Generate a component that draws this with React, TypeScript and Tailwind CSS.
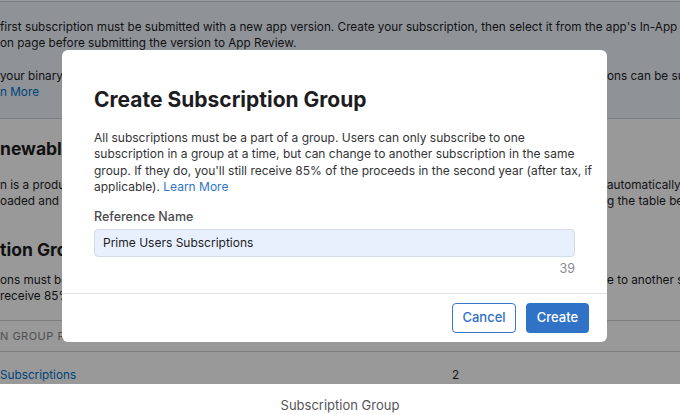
import React from "react";

const font = { fontFamily: "Inter, 'Liberation Sans', sans-serif" };

function SplitLine({ left, right, className }: { left: React.ReactNode; right?: React.ReactNode; className?: string }) {
  return (
    <div className={"flex whitespace-nowrap overflow-hidden " + (className ?? "")}>
      <div className="w-[607px] shrink-0 overflow-hidden">{left}</div>
      {right && <div>{right}</div>}
    </div>
  );
}

export default function App() {
  return (
    <div className="w-[680px] h-[415px] bg-white overflow-hidden" style={font}>
      <div className="relative h-[384px] overflow-hidden">
        {/* background page */}
        <div className="flex flex-col text-[11.75px] text-[#1d1d1f]">
          <div className="mt-[1px] h-[118px] bg-[#eef5fd] border-t border-b border-[#c9d2dc] pt-[17px] leading-[16px]">
            <div className="whitespace-nowrap overflow-hidden">
              first subscription must be submitted with a new app version. Create your subscription, then select it from the app's In-App Purchases
            </div>
            <div className="whitespace-nowrap overflow-hidden">on page before submitting the version to App Review.</div>
            <div className="mt-[17px]">
              <SplitLine
                left={<span>your binary has been uploaded and your first subscription has been approved</span>}
                right={<span>ons can be submitted</span>}
              />
            </div>
            <div className="text-[#0070c9]">n More</div>
          </div>
          <div className="pt-[19px] text-[17.5px] font-bold leading-[22px] whitespace-nowrap">newable Subscriptions</div>
          <div className="mt-[17px] leading-[16px]">
            <SplitLine
              left={<span>n is a product that users can purchase on a recurring basis</span>}
              right={<span>automatically</span>}
            />
            <SplitLine
              left={<span>oaded and your first subscription has been created</span>}
              right={<span>g the table below</span>}
            />
          </div>
          <div className="mt-[30px] text-[17.5px] font-bold leading-[22px] whitespace-nowrap">tion Groups</div>
          <div className="mt-[11px] leading-[16px]">
            <SplitLine
              left={<span>ons must be a part of a group</span>}
              right={<span>e to another subscription</span>}
            />
            <div className="whitespace-nowrap">receive 85% of the proceeds</div>
          </div>
          <div className="mt-[16px] border-t border-b border-[#d2d2d7] h-[32px] flex items-center text-[11px] tracking-[0.5px] text-[#86868b] whitespace-nowrap">
            N GROUP REFERENCE NAME
          </div>
          <div className="flex pt-[15px] leading-[16px] whitespace-nowrap">
            <div className="w-[452px] text-[#0070c9]">Subscriptions</div>
            <div>2</div>
          </div>
        </div>

        {/* dim overlay */}
        <div className="absolute inset-0 bg-black/40" />

        {/* modal */}
        <div className="absolute left-[62px] top-[50px] w-[545px] h-[292px] bg-white rounded-[6px] flex flex-col">
          <div className="px-[32px] pt-[37px] flex-1">
            <h1 className="text-[21px] font-bold leading-[26px] text-[#1d1d1f]">Create Subscription Group</h1>
            <p className="mt-[17px] text-[12px] leading-[16.3px] text-[#333336] whitespace-nowrap">
              All subscriptions must be a part of a group. Users can only subscribe to one
              <br />
              subscription in a group at a time, but can change to another subscription in the same
              <br />
              group. If they do, you'll still receive 85% of the proceeds in the second year (after tax, if
              <br />
              applicable). <span className="text-[#2f74c8]">Learn More</span>
            </p>
            <div className="mt-[14px] text-[12.5px] font-medium leading-[16px] text-[#4a4a4d]">Reference Name</div>
            <div className="mt-[4px] h-[28px] rounded-[4px] bg-[#e8f0fd] border border-[#d3dbe6] flex items-center px-[8px] text-[12px] text-[#1d1d1f]">
              Prime Users Subscriptions
            </div>
            <div className="mt-[5px] text-right text-[12.5px] leading-[14px] text-[#8a8a8e]">39</div>
          </div>
          <div className="border-t border-[#e1e1e3] h-[49px] flex items-center justify-end gap-[10px] pr-[18px]">
            <button className="w-[64px] h-[30px] rounded-[4px] border border-[#3a76c6] text-[#2f6fc4] text-[13px] font-medium">
              Cancel
            </button>
            <button className="w-[63px] h-[30px] rounded-[4px] bg-[#3072c5] text-white text-[13px] font-medium">
              Create
            </button>
          </div>
        </div>
      </div>
      <div className="pt-[13px] leading-[16px] text-center text-[13px] text-[#555558]">Subscription Group</div>
    </div>
  );
}
